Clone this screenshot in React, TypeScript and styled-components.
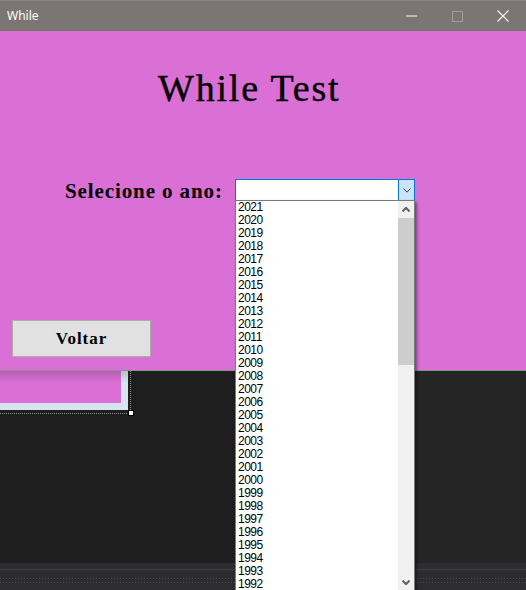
import React from "react";
import styled, { createGlobalStyle } from "styled-components";

const Global = createGlobalStyle`
  html, body { margin: 0; padding: 0; background: #1e1e1e; overflow: hidden; }
  #root { width: 526px; height: 590px; }
`;

const Window = styled.div`
  width: 526px;
  height: 590px;
  overflow: hidden;
  display: flex;
  flex-direction: column;
  font-family: "Liberation Sans", Arial, sans-serif;
`;

const TitleBar = styled.div`
  flex: none;
  height: 31px;
  box-sizing: border-box;
  display: flex;
  align-items: center;
  background: #7b7674;
  border-top: 1px solid #8a8583;
  padding-left: 7px;
`;

const TitleText = styled.span`
  color: #ffffff;
  font: 400 12px/16px "Noto Sans", "Open Sans", sans-serif;
`;

const Caption = styled.div`
  margin-left: auto;
  display: flex;
  height: 100%;
`;

const CapButton = styled.div`
  width: 46px;
  display: flex;
  align-items: center;
  justify-content: center;
`;

const Form = styled.div`
  flex: none;
  height: 339px;
  background: #da70d6;
  border-bottom: 1px solid #8d8d8d;
  display: flex;
  flex-direction: column;
  position: relative;
  z-index: 2;
`;

const Heading = styled.h1`
  margin: 35px 0 0 158px;
  font: 400 38px/44px "Liberation Serif", "Times New Roman", serif;
  letter-spacing: 1.8px;
  color: #000;
  -webkit-text-stroke: 0.4px #000;
`;

const FieldRow = styled.div`
  display: flex;
  align-items: flex-start;
  margin-top: 69px;
  padding-left: 65px;
`;

const FieldLabel = styled.label`
  width: 170px;
  margin-top: 1px;
  font: 700 21px/22px "Liberation Serif", "Times New Roman", serif;
  letter-spacing: 0.9px;
  color: #000;
`;

const ComboWrap = styled.div`
  position: relative;
  width: 180px;
  height: 22px;
`;

const ComboBox = styled.div`
  box-sizing: border-box;
  width: 100%;
  height: 100%;
  border: 1px solid #0078d7;
  background: #fff;
  display: flex;
  justify-content: flex-end;
`;

const ComboButton = styled.div`
  box-sizing: border-box;
  width: 16px;
  height: 100%;
  background: #cce4f7;
  border-left: 1px solid #0078d7;
  display: flex;
  align-items: center;
  justify-content: center;
`;

const DropList = styled.div`
  position: absolute;
  top: 21px;
  left: 0;
  width: 180px;
  height: 392px;
  box-sizing: border-box;
  border: 1px solid #7a7a7a;
  background: #fff;
  display: flex;
  box-shadow: 2px 2px 3px rgba(0, 0, 0, 0.45);
  z-index: 10;
`;

const Items = styled.div`
  flex: 1;
  overflow: hidden;
  display: flex;
  flex-direction: column;
`;

const Item = styled.div`
  flex: none;
  height: 13px;
  padding-left: 2px;
  font: 400 12px/13px "Liberation Sans", Arial, sans-serif;
  letter-spacing: -0.5px;
  color: #000;
`;

const ScrollBar = styled.div`
  width: 16px;
  background: #f0f0f0;
  display: flex;
  flex-direction: column;
`;

const ScrollArrow = styled.div`
  flex: none;
  height: 17px;
  display: flex;
  align-items: center;
  justify-content: center;
`;

const Thumb = styled.div`
  flex: none;
  height: 147px;
  background: #cdcdcd;
`;

const Track = styled.div`
  flex: 1;
`;

const ActionButton = styled.button`
  margin: 118px 0 0 12px;
  width: 139px;
  height: 37px;
  box-sizing: border-box;
  border: 1px solid #adadad;
  background: #e1e1e1;
  padding: 0;
  font: 700 17px/20px "Liberation Serif", "Times New Roman", serif;
  letter-spacing: 1px;
  color: #000;
  cursor: pointer;
`;

const Designer = styled.div`
  flex: 1;
  display: flex;
  flex-direction: column;
  background: #1e1e1e;
`;

const Surface = styled.div`
  flex: 1;
  display: flex;
`;

const Canvas = styled.div`
  flex: 1;
  background: #1e1e1e;
`;

const SidePane = styled.div`
  width: 111px;
  background: #252526;
`;

const DesignFrame = styled.div`
  position: relative;
  width: 121px;
  height: 32px;
  background: #da70d6;
  border-right: 7px solid #d7e3f0;
  border-bottom: 7px solid #d7e3f0;
  &::before {
    content: "";
    position: absolute;
    left: 0;
    top: 0;
    right: -7px;
    height: 12px;
    background: linear-gradient(rgba(0, 0, 0, 0.16), rgba(0, 0, 0, 0));
  }
`;

const VGuide = styled.div`
  position: absolute;
  left: 130px;
  top: 0;
  width: 1px;
  height: 39px;
  background: repeating-linear-gradient(to bottom, #8f8f8f 0 1px, transparent 1px 2px);
`;

const HGuide = styled.div`
  position: absolute;
  left: 0;
  top: 42px;
  width: 127px;
  height: 1px;
  background: repeating-linear-gradient(to right, #8f8f8f 0 1px, transparent 1px 2px);
`;

const Handle = styled.div`
  position: absolute;
  left: 128px;
  top: 39px;
  width: 6px;
  height: 6px;
  box-sizing: border-box;
  background: #fff;
  border: 1px solid #000;
`;

const BottomPanel = styled.div`
  flex: none;
  height: 27px;
  background: #2d2d30;
  display: flex;
  flex-direction: column;
`;

const PanelHeader = styled.div`
  height: 6px;
`;

const PanelDivider = styled.div`
  height: 1px;
  background: #3f3f46;
`;

const DotStrip = styled.div`
  margin-top: 8px;
  height: 5px;
  background-image: radial-gradient(circle at 0.5px 0.5px, #4a4a4f 0.7px, transparent 0.8px);
  background-size: 3px 4px;
`;

const years: number[] = [];
for (let y = 2021; y >= 1992; y--) years.push(y);

const Chevron = ({ up, w, h, stroke, color }: { up?: boolean; w: number; h: number; stroke: number; color: string }) => (
  <svg width={w} height={h} viewBox={`0 0 ${w} ${h}`}>
    <polyline
      points={up ? `0.5,${h - 0.5} ${w / 2},0.8 ${w - 0.5},${h - 0.5}` : `0.5,0.5 ${w / 2},${h - 0.8} ${w - 0.5},0.5`}
      fill="none"
      stroke={color}
      strokeWidth={stroke}
    />
  </svg>
);

export default function App() {
  return (
    <>
      <Global />
      <Window>
        <TitleBar>
          <TitleText>While</TitleText>
          <Caption>
            <CapButton>
              <svg width="11" height="2" viewBox="0 0 11 2">
                <line x1="0" y1="1" x2="11" y2="1" stroke="#fff" strokeWidth="1" />
              </svg>
            </CapButton>
            <CapButton>
              <svg width="11" height="11" viewBox="0 0 11 11">
                <rect x="0.5" y="0.5" width="10" height="10" fill="none" stroke="#a29d9b" strokeWidth="1" />
              </svg>
            </CapButton>
            <CapButton>
              <svg width="12" height="12" viewBox="0 0 12 12">
                <line x1="0.5" y1="0.5" x2="11.5" y2="11.5" stroke="#fff" strokeWidth="1.1" />
                <line x1="11.5" y1="0.5" x2="0.5" y2="11.5" stroke="#fff" strokeWidth="1.1" />
              </svg>
            </CapButton>
          </Caption>
        </TitleBar>

        <Form>
          <Heading>While Test</Heading>
          <FieldRow>
            <FieldLabel>Selecione o ano:</FieldLabel>
            <ComboWrap>
              <ComboBox>
                <ComboButton>
                  <Chevron w={8} h={5} stroke={1} color="#404040" />
                </ComboButton>
              </ComboBox>
              <DropList>
                <Items>
                  {years.map((y) => (
                    <Item key={y}>{y}</Item>
                  ))}
                </Items>
                <ScrollBar>
                  <ScrollArrow>
                    <Chevron up w={8} h={5} stroke={2} color="#606060" />
                  </ScrollArrow>
                  <Thumb />
                  <Track />
                  <ScrollArrow>
                    <Chevron w={8} h={5} stroke={2} color="#606060" />
                  </ScrollArrow>
                </ScrollBar>
              </DropList>
            </ComboWrap>
          </FieldRow>
          <ActionButton>Voltar</ActionButton>
        </Form>

        <Designer>
          <Surface>
            <Canvas>
              <DesignFrame>
                <VGuide />
                <HGuide />
                <Handle />
              </DesignFrame>
            </Canvas>
            <SidePane />
          </Surface>
          <BottomPanel>
            <PanelHeader />
            <PanelDivider />
            <DotStrip />
          </BottomPanel>
        </Designer>
      </Window>
    </>
  );
}
